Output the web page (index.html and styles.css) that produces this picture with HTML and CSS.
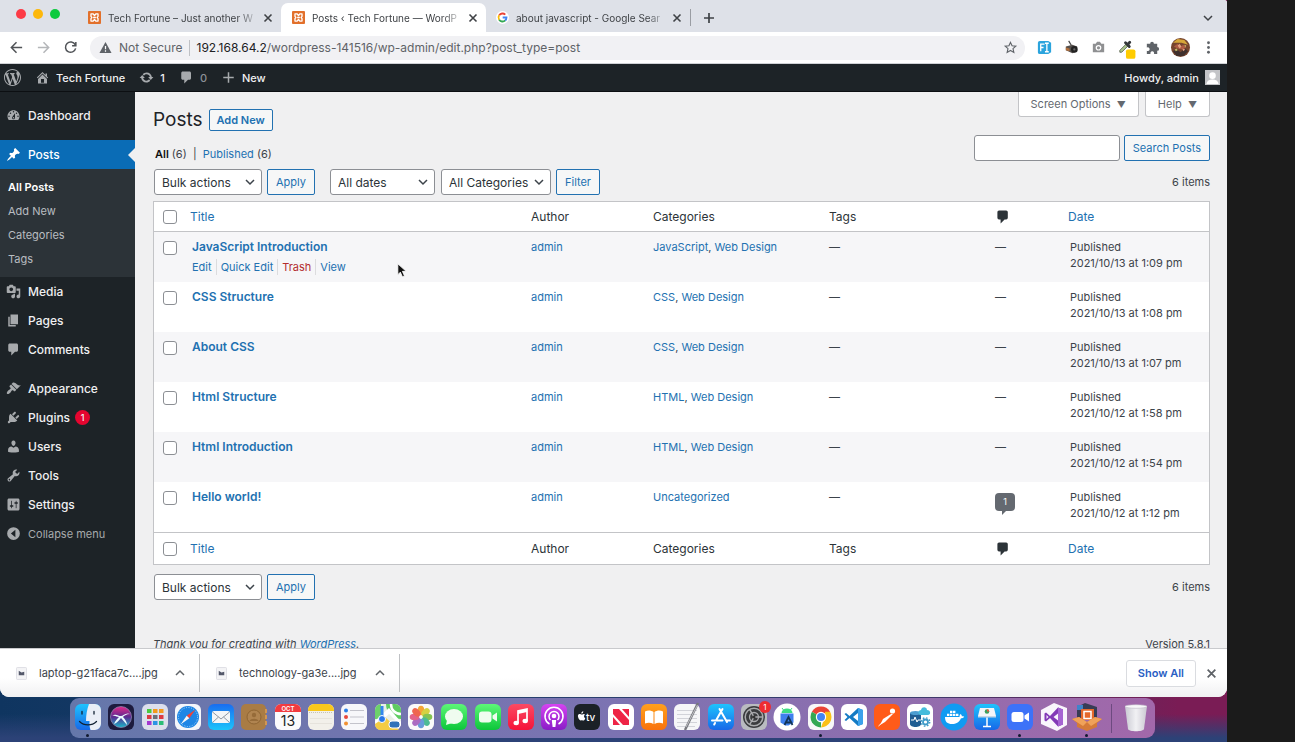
FILE: index.html
```html
<!DOCTYPE html>
<html lang="en">
<head>
<meta charset="utf-8">
<title>Posts ‹ Tech Fortune — WordPress</title>
<link rel="stylesheet" href="styles.css">
</head>
<body>
<svg class="defs" width="0" height="0" aria-hidden="true">
  <defs>
    <symbol id="xampp" viewBox="0 0 14 14"><rect width="14" height="14" rx="1" fill="#e2702b"/><path d="M3.200 3.200h2.400L7 4.800l1.400-1.600h2.400v2.600L9.800 7l1 1.200v2.600H8.400L7 9.200l-1.400 1.600H3.200V8.200l1-1.200-1-1.200zM5.500 7h3" fill="none" stroke="#fff" stroke-width="1.400" stroke-linejoin="round"/></symbol>
    <symbol id="chev" viewBox="0 0 10 10"><path d="M1 3l4 4 4-4" fill="none" stroke="currentColor" stroke-width="1.500"/></symbol>
    <symbol id="close" viewBox="0 0 10 10"><path d="M1.500 1.500l7 7m0-7l-7 7" fill="none" stroke="currentColor" stroke-width="1.600"/></symbol>
    <symbol id="comment" viewBox="0 0 20 20"><path d="M5 2h9c1.100 0 2 .9 2 2v7c0 1.100-.9 2-2 2h-2l-5 5v-5H5c-1.100 0-2-.9-2-2V4c0-1.100.9-2 2-2z"/></symbol>
    <symbol id="picture" viewBox="0 0 12 14"><rect x=".5" y=".5" width="11" height="13" rx="1" fill="#f4f4f6" stroke="#dcdce2"/><path d="M3 4l3 2 3-1v4H3z" fill="#55596b"/></symbol>
    <linearGradient id="gBlue" x2="0" y2="1"><stop stop-color="#1fc3fd"/><stop offset="1" stop-color="#1768e8"/></linearGradient>
    <linearGradient id="gMail" x2="0" y2="1"><stop stop-color="#1a6df0"/><stop offset="1" stop-color="#1cc4fb"/></linearGradient>
    <linearGradient id="gGreen" x2="0" y2="1"><stop stop-color="#5df777"/><stop offset="1" stop-color="#0cc63a"/></linearGradient>
    <linearGradient id="gRed" x2="0" y2="1"><stop stop-color="#fb4a63"/><stop offset="1" stop-color="#f5133a"/></linearGradient>
    <linearGradient id="gPurple" x2="0" y2="1"><stop stop-color="#d543f1"/><stop offset="1" stop-color="#8a1cc7"/></linearGradient>
    <linearGradient id="gOrange" x2="0" y2="1"><stop stop-color="#ffa01c"/><stop offset="1" stop-color="#f9720d"/></linearGradient>
    <linearGradient id="gTrash" x2="1" y2="0"><stop stop-color="#c9c9d2"/><stop offset=".5" stop-color="#f1f1f4"/><stop offset="1" stop-color="#cbc8d2"/></linearGradient>
    <linearGradient id="gSiri" x2="0" y2="1"><stop stop-color="#e42a8a"/><stop offset=".5" stop-color="#5a2a91"/><stop offset="1" stop-color="#18b9c9"/></linearGradient>
  </defs>
</svg>

<div class="desktop">
  <div class="browser">
    <div class="tabstrip">
      <div class="lights"><i class="red"></i><i class="amber"></i><i class="green"></i></div>
      <div class="tab">
        <svg class="fav"><use href="#xampp"/></svg><span class="tab-title">Tech Fortune – Just another W</span>
        <button class="tab-close" aria-label="Close tab"><svg><use href="#close"/></svg></button>
      </div>
      <div class="tab active">
        <svg class="fav"><use href="#xampp"/></svg><span class="tab-title">Posts ‹ Tech Fortune — WordP</span>
        <button class="tab-close" aria-label="Close tab"><svg><use href="#close"/></svg></button>
      </div>
      <div class="tab last">
        <svg class="fav" viewBox="0 0 14 14"><circle cx="7" cy="7" r="7" fill="#fff"/><g fill="none" stroke-width="2"><path d="M3.400 4.600A4.300 4.300 0 0 1 10 3.900" stroke="#ea4335"/><path d="M3.400 9.400a4.300 4.300 0 0 1 0-4.800" stroke="#fbbc05"/><path d="M10 10.100a4.300 4.300 0 0 1-6.600-.7" stroke="#34a853"/><path d="M7.200 7h4.100a4.300 4.300 0 0 1-1.400 3.200" stroke="#4285f4"/></g></svg><span class="tab-title">about javascript - Google Sear</span>
        <button class="tab-close" aria-label="Close tab"><svg><use href="#close"/></svg></button>
      </div>
      <button class="new-tab" aria-label="New tab"><svg viewBox="0 0 12 12"><path d="M6 1v10M1 6h10" stroke="currentColor" stroke-width="1.700"/></svg></button>
      <button class="tab-search" aria-label="Search tabs"><svg><use href="#chev"/></svg></button>
    </div>

    <div class="toolbar">
      <button aria-label="Back"><svg viewBox="0 0 16 16"><path d="M14 8H3m5-5.500L2.500 8 8 13.500"/></svg></button>
      <button aria-label="Forward" class="dim"><svg viewBox="0 0 16 16"><path d="M2 8h11M8 2.500L13.500 8 8 13.500"/></svg></button>
      <button aria-label="Reload"><svg viewBox="0 0 16 16"><path d="M13 5A5.500 5.500 0 1 0 13.500 9M13.700 2v4h-4"/></svg></button>
      <div class="address">
        <svg class="warn" viewBox="0 0 14 14"><path d="M7 1l6.500 12H.5z" fill="#5f6368"/><path d="M7 5.500v3.500M7 10v1.500" stroke="#fff" stroke-width="1.300"/></svg>
        <span class="secure">Not Secure</span>
        <span class="url"><b>192.168.64.2</b>/wordpress-141516/wp-admin/edit.php?post_type=post</span>
        <svg class="star" viewBox="0 0 14 14"><path d="M7 1.500l1.700 3.700 4 .4-3 2.700.9 4L7 10.200l-3.600 2.100.9-4-3-2.700 4-.4z" fill="none" stroke="#5f6368" stroke-width="1.200"/></svg>
      </div>
      <div class="extensions">
        <svg viewBox="0 0 18 18"><path d="M4 2h9l3 2v10l-3 2H4a2 2 0 0 1-2-2V4a2 2 0 0 1 2-2z" fill="#2ba4dd"/><path d="M5 13V5.500h4M5 9h3M9.500 4.500h4M9.500 13.500h4M11.500 4.500v9" stroke="#fff" stroke-width="1.400" fill="none"/></svg>
        <svg viewBox="0 0 18 18"><path d="M6 2l3 5" stroke="#444" stroke-width="1.200"/><path d="M3 8l7-2 5 2v5l-5 2-7-3z" fill="#55504d"/><path d="M3 9l4 1v3l-4-1z" fill="#b06f3c"/><circle cx="12" cy="11" r="3.500" fill="#222"/><circle cx="12" cy="11" r="1.200" fill="#666"/></svg>
        <svg viewBox="0 0 18 18"><path d="M3 5h3l1.500-2h3L12 5h3v9H3z" fill="#8f9092"/><circle cx="9" cy="9.300" r="3" fill="#fff"/><circle cx="9" cy="9.300" r="1.700" fill="#8f9092"/></svg>
        <svg viewBox="0 0 18 18"><path d="M3 12l7-7 2 2-7 7H3z" fill="#a9c48c" stroke="#66705c"/><path d="M9 4l4 4M11 6l2.500-2.500" stroke="#35383b" stroke-width="3" stroke-linecap="round"/><rect x="9.500" y="11" width="10" height="10" rx="2" fill="#fc0"/></svg>
        <svg viewBox="0 0 18 18"><path d="M3 5h3.500a2 2 0 1 1 4 0H14v3.500a2 2 0 1 1 0 4V16h-3.500a2 2 0 1 0-3.500 0H3v-3.500a2 2 0 1 0 0-3.500z" fill="#5f6368"/></svg>
        <svg class="profile" viewBox="0 0 20 20"><circle cx="10" cy="10" r="10" fill="#77452e"/><path d="M2 5l5-4 7 1 4 5-7-2z" fill="#d6a739"/><path d="M3 9l4-3 2 4 4-3 3 3-4 2-5-1z" fill="#ae5b42"/><path d="M2 14l4-2 4 3 5-4 3 3-5 5H6z" fill="#3f302d"/><path d="M7 8l2-2 2 3-2 2zM12 11l3 1-2 2z" fill="#e4a080"/><path d="M4 12l2-1 1 2-2 1zM14 7l2 1-1 2z" fill="#c9c06a"/></svg>
        <svg viewBox="0 0 18 18"><g fill="#5f6368"><circle cx="9" cy="4" r="1.500"/><circle cx="9" cy="9" r="1.500"/><circle cx="9" cy="14" r="1.500"/></g></svg>
      </div>
    </div>

    <header class="adminbar">
      <a href="#" aria-label="About WordPress"><svg class="wp" viewBox="0 0 20 20"><path d="M20 10c0-5.510-4.490-10-10-10C4.480 0 0 4.490 0 10c0 5.520 4.480 10 10 10 5.510 0 10-4.480 10-10zM7.780 15.370L4.370 6.220c.55-.02 1.170-.08 1.170-.08.5-.06.44-1.130-.06-1.110 0 0-1.450.11-2.370.11-.18 0-.37 0-.58-.01C4.120 2.690 6.870 1.110 10 1.110c2.330 0 4.450.87 6.050 2.340-.68-.11-1.650.39-1.650 1.580 0 .74.45 1.360.9 2.100.35.61.55 1.360.55 2.460 0 1.490-1.400 5-1.400 5l-3.030-8.370c.54-.02.82-.17.82-.17.5-.05.44-1.250-.06-1.220 0 0-1.440.12-2.380.12-.87 0-2.330-.12-2.330-.12-.5-.03-.56 1.200-.06 1.220l.92.08 1.260 3.410zM17.410 10c.24-.64.74-1.870.43-4.250.7 1.290 1.050 2.710 1.050 4.250 0 3.290-1.730 6.240-4.400 7.780.97-2.590 1.940-5.200 2.920-7.780zM6.100 18.090C3.120 16.650 1.110 13.530 1.110 10c0-1.300.23-2.480.72-3.590C3.250 10.300 4.670 14.200 6.100 18.090zm4.030-6.630l2.580 6.980c-.86.29-1.760.45-2.710.45-.79 0-1.570-.11-2.290-.33.81-2.380 1.620-4.740 2.420-7.100z"/></svg></a>
      <a href="#"><svg viewBox="0 0 20 20"><path d="M16 8.500l1.530 1.530-1.060 1.060L10 4.600l-6.470 6.490-1.060-1.060L10 2.500l4 4v-2h2v4zm-6-2.460l6 5.990V18H4v-5.970zM12 17v-5H8v5h4z"/></svg>Tech Fortune</a>
      <a href="#"><svg viewBox="0 0 20 20"><path d="M10.200 3.280c3.530 0 6.430 2.610 6.920 6h2.080l-3.500 4-3.500-4h2.320c-.45-1.970-2.210-3.450-4.320-3.450-1.450 0-2.730.71-3.540 1.780L4.950 5.660C6.230 4.200 8.110 3.280 10.200 3.280zm-.4 13.440c-3.520 0-6.430-2.610-6.920-6H.8l3.500-4c1.170 1.330 2.330 2.670 3.500 4H5.480c.45 1.970 2.210 3.450 4.320 3.450 1.450 0 2.730-.71 3.540-1.780l1.710 1.950c-1.280 1.460-3.150 2.380-5.250 2.380z"/></svg>1</a>
      <a href="#" class="muted"><svg><use href="#comment"/></svg>0</a>
      <a href="#"><svg viewBox="0 0 20 20"><path d="M9 3h2v6h6v2h-6v6H9v-6H3V9h6z"/></svg>New</a>
      <a href="#" class="howdy">Howdy, admin<svg class="avatar" viewBox="0 0 16 16"><path d="M0 0h16v16H0z" fill="#c3c4c7"/><circle cx="8" cy="6" r="3.500" fill="#fff"/><path d="M1.500 15c.5-3.500 3-5 6.500-5s6 1.500 6.500 5z" fill="#fff"/></svg></a>
    </header>

    <div class="page">
      <nav class="sidebar">
        <a href="#"><svg viewBox="0 0 20 20"><path d="M3.760 16h12.480c1.100-1.370 1.760-3.110 1.760-5 0-4.420-3.580-8-8-8s-8 3.580-8 8c0 1.890.66 3.630 1.760 5zM10 4c.55 0 1 .45 1 1s-.45 1-1 1-1-.45-1-1 .45-1 1-1zM6 6c.55 0 1 .45 1 1s-.45 1-1 1-1-.45-1-1 .45-1 1-1zm8 0c.55 0 1 .45 1 1s-.45 1-1 1-1-.45-1-1 .45-1 1-1zm-5.370 5.550L12 7v6c0 1.100-.9 2-2 2s-2-.9-2-2c0-.57.24-1.080.63-1.450zM4 10c.55 0 1 .45 1 1s-.45 1-1 1-1-.45-1-1 .45-1 1-1zm12 0c.55 0 1 .45 1 1s-.45 1-1 1-1-.45-1-1 .45-1 1-1zm-5 3c0-.55-.45-1-1-1s-1 .45-1 1 .45 1 1 1 1-.45 1-1z"/></svg>Dashboard</a>
        <a href="#" class="group current"><svg viewBox="0 0 20 20"><path d="M10.440 3.020l1.820-1.820 6.360 6.350-1.830 1.820c-1.050-.68-2.480-.57-3.410.36l-.75.75c-.92.93-1.040 2.350-.35 3.410l-1.830 1.820-2.410-2.410-2.800 2.790c-.42.42-3.380 2.710-3.800 2.290s1.860-3.390 2.280-3.810l2.790-2.790L4.100 9.360l1.830-1.820c1.050.69 2.480.57 3.400-.36l.75-.75c.93-.92 1.050-2.350.36-3.410z"/></svg>Posts</a>
        <div class="submenu">
          <a href="#" class="on">All Posts</a><a href="#">Add New</a><a href="#">Categories</a><a href="#">Tags</a>
        </div>
        <a href="#"><svg viewBox="0 0 20 20"><path d="M13 11V4c0-.55-.45-1-1-1h-1.670L9 1H5L3.670 3H2c-.55 0-1 .45-1 1v7c0 .55.45 1 1 1h10c.55 0 1-.45 1-1zM7 4.500c1.380 0 2.500 1.120 2.500 2.500S8.380 9.500 7 9.500 4.500 8.380 4.500 7 5.620 4.500 7 4.500zM14 6h5v10.500c0 1.380-1.120 2.500-2.500 2.500S14 17.880 14 16.500s1.120-2.500 2.500-2.500c.17 0 .34.02.5.05V9h-3V6zm-4 8.050V13h2v3.500c0 1.380-1.120 2.500-2.500 2.500S7 17.880 7 16.500 8.120 14 9.500 14c.17 0 .34.02.5.05z"/></svg>Media</a>
        <a href="#"><svg viewBox="0 0 20 20"><path d="M6 15V2h10v13H6zm-1 1h8v2H3V5h2v11z"/></svg>Pages</a>
        <a href="#"><svg><use href="#comment"/></svg>Comments</a>
        <a href="#" class="group"><svg viewBox="0 0 20 20"><path d="M14.480 11.060L7.410 3.990l1.500-1.500c.5-.56 2.300-.47 3.510.32 1.210.8 1.430 1.280 2.910 2.100 1.180.64 2.450 1.260 4.450.85zm-.71.71L6.700 4.700 4.930 6.470c-.39.39-.39 1.020 0 1.410l1.060 1.060c.39.39.39 1.030 0 1.420-.6.6-1.430 1.110-2.210 1.690-.35.26-.7.53-1.010.84C1.430 14.230.4 16.080 1.400 17.070c.99 1 2.840-.03 4.180-1.360.31-.31.58-.66.85-1.020.57-.78 1.080-1.610 1.690-2.210.39-.39 1.020-.39 1.410 0l1.060 1.060c.39.39 1.020.39 1.410 0z"/></svg>Appearance</a>
        <a href="#"><svg viewBox="0 0 20 20"><path d="M13.110 4.360L9.870 7.600 8 5.730l3.240-3.240c.35-.34 1.050-.2 1.560.32.52.51.66 1.210.31 1.550zm-8 1.770l.91-1.120 9.010 9.010-1.190.84c-.71.71-2.630 1.160-3.820 1.160H6.140L4.900 17.260c-.59.59-1.540.59-2.120 0-.59-.58-.59-1.530 0-2.120l1.240-1.240v-3.880c0-1.130.4-3.190 1.090-3.890zm7.260 3.970l3.240-3.240c.34-.35 1.040-.21 1.550.31.52.51.66 1.210.31 1.550l-3.240 3.250z"/></svg>Plugins<span class="count">1</span></a>
        <a href="#"><svg viewBox="0 0 20 20"><path d="M10 9.250c-2.270 0-2.730-3.440-2.730-3.440C7 4.020 7.820 2 9.970 2c2.160 0 2.980 2.020 2.710 3.810 0 0-.41 3.440-2.680 3.440zm0 2.570L12.720 10c2.390 0 4.520 2.330 4.520 4.530v2.490s-3.650 1.130-7.240 1.130c-3.650 0-7.240-1.130-7.240-1.130v-2.490c0-2.250 1.940-4.480 4.470-4.480z"/></svg>Users</a>
        <a href="#"><svg viewBox="0 0 20 20"><path d="M16.680 9.770c-1.340 1.340-3.300 1.670-4.950.99l-5.410 6.520c-.99.99-2.590.99-3.580 0s-.99-2.590 0-3.570l6.520-5.420c-.68-1.650-.35-3.610.99-4.950 1.280-1.280 3.120-1.620 4.720-1.060l-2.890 2.890 2.820 2.820 2.860-2.870c.53 1.580.18 3.390-1.080 4.650zM3.810 16.210c.4.39 1.040.39 1.430 0 .4-.4.4-1.040 0-1.430-.39-.4-1.030-.4-1.430 0-.39.39-.39 1.030 0 1.430z"/></svg>Tools</a>
        <a href="#"><svg viewBox="0 0 20 20"><path d="M18 16V4c0-1.100-.9-2-2-2H4c-1.100 0-2 .9-2 2v12c0 1.100.9 2 2 2h12c1.100 0 2-.9 2-2zM8 11h1c.55 0 1 .45 1 1s-.45 1-1 1H8v1.500c0 .28-.22.5-.5.5s-.5-.22-.5-.5V13H6c-.55 0-1-.45-1-1s.45-1 1-1h1V5.500c0-.28.22-.5.5-.5s.5.22.5.5V11zm5-2h-1c-.55 0-1-.45-1-1s.45-1 1-1h1V5.500c0-.28.22-.5.5-.5s.5.22.5.5V7h1c.55 0 1 .45 1 1s-.45 1-1 1h-1v5.500c0 .28-.22.5-.5.5s-.5-.22-.5-.5V9z"/></svg>Settings</a>
        <button class="collapse"><svg viewBox="0 0 20 20"><path fill-rule="evenodd" d="M10 1.500a8.500 8.500 0 1 0 0 17 8.500 8.500 0 0 0 0-17zM12.500 5v10L6.500 10z"/></svg>Collapse menu</button>
      </nav>

      <main class="content">
        <div class="head">
          <div>
            <div class="title-row"><h1>Posts</h1><a href="#" class="btn small">Add New</a></div>
            <p class="views"><a href="#" class="all">All</a> (6) &nbsp;<span>|</span>&nbsp; <a href="#">Published</a> (6)</p>
          </div>
          <div class="head-right">
            <div class="screen-meta"><button>Screen Options <span>▼</span></button><button>Help <span>▼</span></button></div>
            <form class="search"><input type="text" aria-label="Search Posts"><button type="button" class="btn">Search Posts</button></form>
          </div>
        </div>

        <div class="tablenav top">
          <label class="select w108"><select aria-label="Bulk actions"><option>Bulk actions</option></select><svg><use href="#chev"/></svg></label>
          <button class="btn">Apply</button>
          <label class="select dates"><select aria-label="Filter by date"><option>All dates</option></select><svg><use href="#chev"/></svg></label>
          <label class="select w110"><select aria-label="Filter by category"><option>All Categories</option></select><svg><use href="#chev"/></svg></label>
          <button class="btn">Filter</button>
          <span class="items">6 items</span>
        </div>

        <table>
          <colgroup><col class="c-check"><col><col class="c-author"><col class="c-cats"><col class="c-tags"><col class="c-comm"><col class="c-date"></colgroup>
          <thead><tr><th><input type="checkbox" aria-label="Select all"></th><th><a href="#">Title</a></th><th>Author</th><th>Categories</th><th>Tags</th><th><svg class="ci" role="img" aria-label="Comments"><use href="#comment"/></svg></th><th><a href="#">Date</a></th></tr></thead>
          <tbody>
            <tr><td><input type="checkbox" aria-label="Select JavaScript Introduction"></td><td><a href="#" class="row-title">JavaScript Introduction</a><div class="actions"><a href="#">Edit</a><a href="#">Quick Edit</a><a href="#" class="trash">Trash</a><a href="#">View</a></div></td><td><a href="#">admin</a></td><td><a href="#">JavaScript</a>, <a href="#">Web Design</a></td><td>—</td><td>—</td><td>Published<br>2021/10/13 at 1:09 pm</td></tr>
            <tr><td><input type="checkbox" aria-label="Select CSS Structure"></td><td><a href="#" class="row-title">CSS Structure</a></td><td><a href="#">admin</a></td><td><a href="#">CSS</a>, <a href="#">Web Design</a></td><td>—</td><td>—</td><td>Published<br>2021/10/13 at 1:08 pm</td></tr>
            <tr><td><input type="checkbox" aria-label="Select About CSS"></td><td><a href="#" class="row-title">About CSS</a></td><td><a href="#">admin</a></td><td><a href="#">CSS</a>, <a href="#">Web Design</a></td><td>—</td><td>—</td><td>Published<br>2021/10/13 at 1:07 pm</td></tr>
            <tr><td><input type="checkbox" aria-label="Select Html Structure"></td><td><a href="#" class="row-title">Html Structure</a></td><td><a href="#">admin</a></td><td><a href="#">HTML</a>, <a href="#">Web Design</a></td><td>—</td><td>—</td><td>Published<br>2021/10/12 at 1:58 pm</td></tr>
            <tr><td><input type="checkbox" aria-label="Select Html Introduction"></td><td><a href="#" class="row-title">Html Introduction</a></td><td><a href="#">admin</a></td><td><a href="#">HTML</a>, <a href="#">Web Design</a></td><td>—</td><td>—</td><td>Published<br>2021/10/12 at 1:54 pm</td></tr>
            <tr><td><input type="checkbox" aria-label="Select Hello world!"></td><td><a href="#" class="row-title">Hello world!</a></td><td><a href="#">admin</a></td><td><a href="#">Uncategorized</a></td><td>—</td><td><a href="#" class="bubble">1</a></td><td>Published<br>2021/10/12 at 1:12 pm</td></tr>
          </tbody>
          <tfoot><tr><th><input type="checkbox" aria-label="Select all"></th><th><a href="#">Title</a></th><th>Author</th><th>Categories</th><th>Tags</th><th><svg class="ci" role="img" aria-label="Comments"><use href="#comment"/></svg></th><th><a href="#">Date</a></th></tr></tfoot>
        </table>

        <div class="tablenav bottom">
          <label class="select w108"><select aria-label="Bulk actions"><option>Bulk actions</option></select><svg><use href="#chev"/></svg></label>
          <button class="btn">Apply</button>
          <span class="items">6 items</span>
        </div>
        <footer><em>Thank you for creating with <a href="#">WordPress</a>.</em><span>Version 5.8.1</span></footer>
        <svg class="pointer" viewBox="0 0 12 18"><path d="M1 1v13l3-3 2.500 5.500 2.500-1L6.500 10H11z" fill="#111" stroke="#fff"/></svg>
      </main>
    </div>

    <div class="downloads">
      <div class="file"><svg class="thumb"><use href="#picture"/></svg><span>laptop-g21faca7c....jpg</span><button aria-label="File options"><svg class="up"><use href="#chev"/></svg></button></div>
      <div class="file"><svg class="thumb"><use href="#picture"/></svg><span>technology-ga3e....jpg</span><button aria-label="File options"><svg class="up"><use href="#chev"/></svg></button></div>
      <button class="show-all">Show All</button>
      <button class="dismiss" aria-label="Close downloads"><svg><use href="#close"/></svg></button>
    </div>
  </div>

  <div class="dock-area">
    <div class="dock">
      <ul>
        <li class="running"><svg viewBox="0 0 26 26"><rect width="26" height="26" rx="6" fill="url(#gBlue)"/><path d="M14 0h6a6 6 0 0 1 6 6v14a6 6 0 0 1-6 6h-4.500c-1-3-1.200-6-1-9H11c0-6 1-12 3-17z" fill="#e9eef6"/><path d="M7 7.500v2.500M19 7.500v2.500M4.500 17.500c4.500 4.500 12.500 4.500 17 0" stroke="#123" stroke-width="1.300" fill="none" stroke-linecap="round"/></svg></li>
        <li><svg viewBox="0 0 26 26"><rect width="26" height="26" rx="6" fill="#1d1b3e"/><circle cx="13" cy="13" r="10.500" fill="url(#gSiri)" stroke="#8c7fae" stroke-width=".8"/><path d="M4 12c4-3 6 0 9 0 2 0 5-4 9-2-4 0-6 2-7 3 2 2 4 5 4 8-2-2-4-5-6-7-2 2-4 5-7 6 1-3 3-5 5-7-2 0-4-2-7-1z" fill="#e9fbff"/></svg></li>
        <li><svg viewBox="0 0 26 26"><rect width="26" height="26" rx="6" fill="#dcdfec"/><g><path d="M5 5h4.500v4H5z" fill="#4bc940"/><path d="M11 5h4.500v4H11zM17 5h4.500v4H17z" fill="#f39a1e"/><path d="M5 11h4.500v4H5zM17 11h4.500v4H17z" fill="#dd3a43"/><path d="M11 11h4.500v4H11z" fill="#6a717c"/><path d="M5 17h4.500v4H5z" fill="#a438d0"/><path d="M11 17h4.500v4H11z" fill="#2c93e4"/><path d="M17 17h4.500v4H17z" fill="#2bbd76"/></g></svg></li>
        <li><svg viewBox="0 0 26 26"><rect width="26" height="26" rx="6" fill="#f4f6fa"/><circle cx="13" cy="13" r="11" fill="#1e86e5"/><circle cx="13" cy="13" r="9.500" fill="none" stroke="#a8d8fa" stroke-dasharray="1 1.500"/><path d="M20.500 5.500L14.300 14.300 11.700 11.700z" fill="#f24236"/><path d="M5.500 20.500l6.200-8.800 2.600 2.600z" fill="#f7f7f7"/></svg></li>
        <li><svg viewBox="0 0 26 26"><rect width="26" height="26" rx="6" fill="url(#gMail)"/><rect x="4" y="7" width="18" height="12" rx="2" fill="#f4f5f7"/><path d="M4.500 8l8.500 7 8.500-7M4.500 18.500l6-5.500m5 0l6 5.500" stroke="#8f98a4" fill="none"/></svg></li>
        <li><svg viewBox="0 0 26 26"><rect width="25" height="26" rx="5" fill="#a97c45"/><path d="M25 5v4M25 11v4M25 17v4" stroke="#d29652" stroke-width="2"/><circle cx="13" cy="13" r="7" fill="#b08450" stroke="#8f6533"/><circle cx="13" cy="11" r="2.200" fill="#966b39"/><path d="M8.500 17c1-3 8-3 9 0z" fill="#966b39"/></svg></li>
        <li><svg viewBox="0 0 26 26"><rect width="26" height="26" rx="6" fill="#fafafc"/><path d="M0 8V6a6 6 0 0 1 6-6h14a6 6 0 0 1 6 6v2z" fill="#f23b3f"/><text x="13" y="7" font-size="6" font-weight="600" text-anchor="middle" fill="#fff">OCT</text><text x="13" y="22" font-size="14" text-anchor="middle" fill="#222">13</text></svg></li>
        <li><svg viewBox="0 0 26 26"><rect width="26" height="26" rx="6" fill="#f2f0ea"/><path d="M0 7V6a6 6 0 0 1 6-6h14a6 6 0 0 1 6 6v1z" fill="#f9c81c"/><path d="M1 8.500h24" stroke="#c9c4b0" stroke-dasharray="1 1"/><path d="M2 14.500h22M2 19.500h22" stroke="#e6e3dc"/></svg></li>
        <li><svg viewBox="0 0 26 26"><rect width="26" height="26" rx="6" fill="#f7f7fa"/><circle cx="5" cy="6.500" r="2" fill="#2a7fe9"/><circle cx="5" cy="13" r="2" fill="#e8483c"/><circle cx="5" cy="19.500" r="2" fill="#f19133"/><path d="M9 6.500h14M9 13h14M9 19.500h14" stroke="#c3c3cb"/></svg></li>
        <li><svg viewBox="0 0 26 26"><rect width="26" height="26" rx="6" fill="#e9efe6"/><path d="M11 0h9a6 6 0 0 1 6 6v9C18 15 11 9 11 0z" fill="#5fcc61"/><path d="M0 6a6 6 0 0 1 6-6v15H0z" fill="#6cd26a"/><path d="M16 0c0 6 4 10 10 10" stroke="#fff" stroke-width="2.500" fill="none"/><path d="M0 17L14 4l12 14v4L14 10 1 22z" fill="#fff"/><path d="M7 2v24" stroke="#3487ee" stroke-width="3"/><path d="M0 20l10-7 14 13H6c-3 0-6-2-6-6z" fill="#f4cc44"/><circle cx="7" cy="15" r="3.500" fill="#2878e8" stroke="#fff"/><rect x="14" y="17" width="11" height="7" rx="3" fill="#3273b9" stroke="#fff"/></svg></li>
        <li><svg viewBox="0 0 26 26"><rect width="26" height="26" rx="6" fill="#fafafa"/><g opacity=".88"><ellipse cx="13" cy="6.500" rx="3.300" ry="4.800" fill="#f59a1c"/><ellipse cx="13" cy="6.500" rx="3.300" ry="4.800" fill="#d2cc28" transform="rotate(45 13 13)"/><ellipse cx="13" cy="6.500" rx="3.300" ry="4.800" fill="#74bd3b" transform="rotate(90 13 13)"/><ellipse cx="13" cy="6.500" rx="3.300" ry="4.800" fill="#35b387" transform="rotate(135 13 13)"/><ellipse cx="13" cy="6.500" rx="3.300" ry="4.800" fill="#568fd6" transform="rotate(180 13 13)"/><ellipse cx="13" cy="6.500" rx="3.300" ry="4.800" fill="#a15abb" transform="rotate(225 13 13)"/><ellipse cx="13" cy="6.500" rx="3.300" ry="4.800" fill="#e04f7a" transform="rotate(270 13 13)"/><ellipse cx="13" cy="6.500" rx="3.300" ry="4.800" fill="#ee5138" transform="rotate(315 13 13)"/></g></svg></li>
        <li><svg viewBox="0 0 26 26"><rect width="26" height="26" rx="6" fill="url(#gGreen)"/><ellipse cx="13" cy="12.500" rx="9" ry="7.500" fill="#effcef"/><path d="M6 16l-1 5 6-2z" fill="#effcef"/></svg></li>
        <li><svg viewBox="0 0 26 26"><rect width="26" height="26" rx="6" fill="url(#gGreen)"/><rect x="4" y="7.500" width="12.500" height="11" rx="3" fill="#effcef"/><path d="M17.500 11.500l4.500-3v9l-4.500-3z" fill="#effcef"/></svg></li>
        <li><svg viewBox="0 0 26 26"><rect width="26" height="26" rx="6" fill="url(#gRed)"/><path d="M10 19V7l9-2v12" fill="none" stroke="#fff" stroke-width="1.700"/><path d="M10 7l9-2v3l-9 2z" fill="#fff"/><ellipse cx="8.200" cy="19" rx="2.700" ry="2.200" fill="#fff"/><ellipse cx="17.200" cy="17" rx="2.700" ry="2.200" fill="#fff"/></svg></li>
        <li><svg viewBox="0 0 26 26"><rect width="26" height="26" rx="6" fill="url(#gPurple)"/><g fill="none" stroke="#fff" stroke-width="1.500"><path d="M8.500 20A9 9 0 1 1 17.500 20"/><path d="M9.500 16a5 5 0 1 1 7 0"/></g><circle cx="13" cy="12" r="2.300" fill="#fff"/><path d="M10.800 16h4.400l-.8 7h-2.800z" fill="#fff"/></svg></li>
        <li><svg viewBox="0 0 26 26"><rect width="26" height="26" rx="6" fill="#1b2127"/><path d="M8.500 10.500c1-1 2-.5 2.500 0-1.500 1-1.200 3 .3 3.700-.6 1.500-1.500 2.800-2.600 2.200-.7-.3-1-.3-1.700 0C5.500 17 3.500 13 4 11.300c.6-1.700 2-1.500 3-.9.700.3 1 .2 1.500.1zM7.300 9.600c0-1.300.8-2.200 2-2.400 0 1.300-.8 2.300-2 2.400z" fill="#fff"/><text x="12" y="16.500" font-size="10" font-weight="500" fill="#fff">tv</text></svg></li>
        <li><svg viewBox="0 0 26 26"><rect width="26" height="26" rx="6" fill="#fff"/><path d="M5 5h6l10 11v5h-6L5 10z" fill="#ee2446"/><path d="M14 5h7v8zM5 13l7 8H5z" fill="#ee2446"/></svg></li>
        <li><svg viewBox="0 0 26 26"><rect width="26" height="26" rx="6" fill="url(#gOrange)"/><path d="M4 7.500c3-1.500 6-1.200 8.500.5v12c-2.500-1.500-5.500-1.800-8.500-.5zM22 7.500c-3-1.500-6-1.200-8.500.5v12c2.500-1.500 5.500-1.800 8.500-.5z" fill="#fff"/></svg></li>
        <li><svg viewBox="0 0 26 26"><rect width="26" height="26" rx="6" fill="#f6f6f8"/><path d="M3 6.500h20M3 10.500h20M3 14.500h20M3 18.500h20M3 22.500h18" stroke="#d2d3d9"/><path d="M24 -1L11 26" stroke="#77787e" stroke-width="2.400"/><path d="M23.500 1L12 23" stroke="#d3d3d6" stroke-width=".8"/></svg></li>
        <li><svg viewBox="0 0 26 26"><rect width="26" height="26" rx="6" fill="url(#gBlue)"/><g fill="none" stroke="#fff" stroke-width="2" stroke-linecap="round"><path d="M14.500 5L8 16.500M11.500 5l7.500 13M4 16.500h10.500M19 16.500h3M7 19l-.8 1.500"/></g></svg></li>
        <li class="badged"><svg viewBox="0 0 26 26"><rect width="26" height="26" rx="6" fill="#b9bbc0"/><circle cx="13" cy="13" r="11" fill="#3a3b3e"/><circle cx="13" cy="13" r="8.800" fill="none" stroke="#aaabae" stroke-width="1.500"/><circle cx="13" cy="13" r="4.500" fill="none" stroke="#aaabae" stroke-width="1.300"/><path d="M13 13h9M13 13L8.500 5.200M13 13L8.500 20.800" stroke="#aaabae" stroke-width="1.500"/><circle cx="13" cy="13" r="1.500" fill="#333"/></svg><span class="badge">1</span></li>
        <li><svg viewBox="0 0 26 26"><circle cx="13" cy="13" r="13.500" fill="#fff"/><path d="M7.500 9a5.500 4.500 0 0 1 11 0z" fill="#3ddc84"/><path d="M8 4l1.500 2M18 4l-1.500 2" stroke="#3ddc84"/><path d="M6.500 9.500h13v9l-5 3h-3l-5-3z" fill="#3f80ee"/><path d="M10.500 21l4-8 4 8M12.500 18.500h4" fill="none" stroke="#123457" stroke-width="1.800"/></svg></li>
        <li class="running"><svg viewBox="0 0 26 26"><rect width="26" height="26" rx="6" fill="#f8f8f8"/><path d="M13 13L3.900 7.800A10.500 10.500 0 0 1 22.100 7.800z" fill="#ea4335"/><path d="M3.900 7.800L13 13v10.500A10.500 10.500 0 0 1 3.900 7.800z" fill="#34a853"/><path d="M22.100 7.800A10.500 10.500 0 0 1 13 23.500L17 13V7.800z" fill="#fbc116"/><circle cx="13" cy="13" r="5.200" fill="#fff"/><circle cx="13" cy="13" r="4" fill="#4285f4"/></svg></li>
        <li><svg viewBox="0 0 26 26"><rect width="26" height="26" rx="6" fill="#fff"/><path d="M17 4l5 2v14l-5 2L8.500 14 5 17l-1.500-1 3-3-3-3L5 9l3.500 3zM17 9l-5 4 5 4z" fill="#147bc4" fill-rule="evenodd"/><path d="M17 4l5 2v14l-5 2z" fill="#3ba2eb"/></svg></li>
        <li><svg viewBox="0 0 26 26"><rect width="26" height="26" rx="6" fill="#ff5b19"/><path d="M17 10l-8 5-3 6 5-3 8-8z" fill="#fff"/><path d="M4.500 22l11-10" stroke="#fff"/><circle cx="18.500" cy="7" r="2.600" fill="#fff"/></svg></li>
        <li><svg viewBox="0 0 26 26"><rect width="26" height="26" rx="6" fill="#fff"/><path d="M3 9v11c0 4 11 4 11 0V9z" fill="#205e93"/><ellipse cx="8.500" cy="9" rx="5.500" ry="2" fill="#4b9dd1"/><path d="M13 11c-3-2-1-5 1-5 1-4 6-3 6 0 4 0 4 5 1 5z" fill="#45bcdc"/><path d="M4 16h3l1-3 2 5 1-2h3" stroke="#fff" fill="none"/><circle cx="18.500" cy="18" r="2.500" fill="none" stroke="#409bc8" stroke-width="1.800"/><circle cx="18.500" cy="18" r="4.200" fill="none" stroke="#409bc8" stroke-width="1.400" stroke-dasharray="1.600 1.700"/></svg></li>
        <li><svg viewBox="0 0 26 26"><circle cx="13" cy="13" r="13.500" fill="#109bf2"/><path d="M4 13h14.500c0-1.500.2-2 1-3 1 .7 1.300 1.400 1.300 2.200 1 0 1.800 0 2.400.5-.8 1.300-2 1.500-3.200 1.500C18 18.500 15 20 11 20c-4.500 0-7-2-7-7z" fill="#fff"/><path d="M6 9.700h2.400v2.400H6zM9 9.700h2.400v2.400H9zM12 9.700h2.400v2.400H12zM15 9.700h2.400v2.400H15zM9 6.700h2.400v2.400H9zM12 6.700h2.400v2.400H12z" fill="#fff"/></svg></li>
        <li><svg viewBox="0 0 26 26"><rect width="26" height="26" rx="6" fill="url(#gBlue)"/><path d="M6 4h14l2 8H4z" fill="#f3f6f9"/><path d="M4 12h18v1.500H4z" fill="#c5d7e6"/><path d="M13 13.500V22M9 22.500h8" stroke="#fff" stroke-width="1.500"/><circle cx="13" cy="7.500" r="2.300" fill="#3aa05e"/><path d="M13 7.500V5.200a2.300 2.300 0 0 1 2.300 2.300z" fill="#ef5b3e"/></svg></li>
        <li class="running"><svg viewBox="0 0 26 26"><rect width="26" height="26" rx="6" fill="#3d72f8"/><rect x="4.500" y="8" width="12" height="10" rx="2.500" fill="#fff"/><path d="M17.500 11.500l4.500-3v9l-4.500-3z" fill="#fff"/></svg></li>
        <li><svg viewBox="0 0 26 26"><path d="M13 -1l13 5v17l-10 6L0 20V6z" fill="#f9f5fc"/><path d="M17 3.500l5 2v15l-5 2L9 14l-4 3.500-1.500-1v-7L5 8.500 9 12zm0 6L12.500 13l4.500 3.500zM5.500 11v4l2-2z" fill="#8339b7" fill-rule="evenodd"/><path d="M17 3.500l5 2v15l-5 2z" fill="#a664d2"/></svg></li>
        <li class="running"><svg viewBox="0 0 26 26"><path d="M3 3l8-4 12 4v12H3z" fill="#383c55"/><path d="M3 1h6v5H3z" fill="#3f83ca"/><path d="M7 5h13v11H7z" fill="#e5682b"/><path d="M10 7.500h7v7h-7z" fill="none" stroke="#fff" stroke-width="1.500"/><path d="M-2 15l7-2 8 5 8-5 7 2-5 4v4l-10 4-10-4v-4z" fill="#d57a38"/><path d="M5 13l8 5-4 4-11-7zM21 13l-8 5 4 4 11-7z" fill="#f0a25a"/></svg></li>
      </ul>
      <div class="trash-bin"><svg viewBox="0 0 26 28"><path d="M2 2h22l-3 23c-.5 3-15.500 3-16 0z" fill="url(#gTrash)"/><ellipse cx="13" cy="2.500" rx="11" ry="1.800" fill="#f8f8fa" stroke="#bdb9c6" stroke-width=".6"/></svg></div>
    </div>
  </div>
</div>
</body>
</html>
```
FILE: styles.css
```css
* { box-sizing: border-box; }
body {
  margin: 0;
  height: 100vh;
  padding-right: 68px;
  background: #1b1b1b;
  color: #3c434a;
  font: 11px/16px Inter, "Liberation Sans", sans-serif;
  overflow: hidden;
}
.defs { position: absolute; }
a { color: #2271b1; text-decoration: none; }
button { font: inherit; color: inherit; background: none; border: 0; padding: 0; }
svg { flex: none; display: block; fill: currentColor; overflow: visible; }
p, h1, ul { margin: 0; padding: 0; }

.desktop {
  height: 100%;
  display: flex;
  flex-direction: column;
  background: linear-gradient(to top, #2c4277 4px, transparent 28px), linear-gradient(to right, #0f3560, #24406f 40%, #3c3a6c 75%, #7a1c55 96%);
}
.browser {
  flex: 1;
  min-height: 0;
  display: flex;
  flex-direction: column;
  background: #fff;
  border-radius: 0 3px 9px 9px;
  overflow: hidden;
}

/* tab strip */
.tabstrip { display: flex; height: 32px; background: #dee1e8; padding-right: 14px; color: #3f4246; }
.lights { display: flex; gap: 7px; width: 76px; padding: 9px 0 0 16px; }
.lights i { width: 10px; height: 10px; border-radius: 50%; }
.red { background: #fc3b46; }
.amber { background: #fdb80b; }
.green { background: #0cca3e; }
.tab { width: 205px; display: flex; align-items: center; padding: 3px 8px 0 12px; }
.tab.active { background: #fff; margin-top: 3px; padding-top: 0; border-radius: 7px 7px 0 0; padding-left: 11px; }
.tab.last { width: 204px; padding-left: 10px; }
.fav { width: 13px; height: 13px; margin-right: 7px; }
.tab-title { flex: 1; font-size: 10px; white-space: nowrap; mask-image: linear-gradient(to right, #000 88%, #0004 98%); }
.tab-close { margin-left: 7px; }
.tab-close svg { width: 10px; height: 10px; }
.new-tab { border-left: 1px solid #9a9da3; height: 17px; margin-top: 9px; padding-left: 12px; }
.new-tab svg { width: 12px; height: 12px; }
.tab-search { margin-left: auto; padding-top: 3px; }
.tab-search svg { width: 10px; height: 10px; }

/* address row */
.toolbar { display: flex; align-items: center; height: 32px; padding: 0 10px 0 9px; border-bottom: 1px solid #d0d2d6; }
.toolbar > button { width: 16px; margin-right: 11px; color: #505357; }
.toolbar > button svg { width: 15px; height: 15px; fill: none; stroke: currentColor; stroke-width: 1.6; }
.toolbar > .dim { color: #b4b6b9; }
.address { flex: 1; display: flex; align-items: center; height: 24px; border-radius: 12px; background: #f1f1f4; padding: 0 8px 0 9px; font-size: 12px; color: #5f6368; }
.warn { width: 13px; height: 13px; margin-right: 7px; }
.secure { border-right: 1px solid #bfc1c5; padding-right: 6px; margin-right: 7px; }
.url { flex: 1; }
.url b { font-weight: 400; color: #202124; }
.star { width: 13px; height: 13px; }
.extensions { display: flex; align-items: center; gap: 10px; padding-left: 11px; }
.extensions svg { width: 17px; height: 17px; }
.extensions .profile { width: 19px; height: 19px; }

/* WordPress top bar */
.adminbar { display: flex; align-items: center; height: 28px; padding: 0 7px 0 4px; background: #1d2327; border-bottom: 1px solid #0c0f12; }
.adminbar a { display: flex; align-items: center; gap: 6px; margin-right: 14px; color: #f0f0f1; font-weight: 500; }
.adminbar svg { width: 15px; height: 15px; color: #a7aaad; }
.adminbar .wp { width: 17px; height: 17px; }
.adminbar .muted { color: #8c9196; }
.adminbar .howdy { margin: 0 0 0 auto; }

/* sidebar */
.page { flex: 1; min-height: 0; display: flex; overflow: hidden; }
.sidebar { width: 135px; flex: none; background: #1d2327; padding-top: 9px; }
.sidebar > a, .collapse { display: flex; align-items: center; gap: 7px; height: 29px; width: 100%; padding-left: 6px; color: #f0f0f1; font-size: 12px; font-weight: 500; }
.sidebar svg { width: 15px; height: 15px; color: #a7aaad; }
.sidebar > .group { margin-top: 10px; }
.sidebar > .current { position: relative; background: #0a6cb6; color: #fff; }
.sidebar .current svg { color: #fff; }
.current::after { content: ""; position: absolute; right: 0; border: 7px solid transparent; border-right-color: #f0f0f1; border-left: 0; }
.submenu { background: #2c3338; padding: 6px 0; }
.submenu a { display: block; line-height: 24px; padding-left: 8px; color: #b9bdc1; }
.submenu .on { color: #fff; font-weight: 600; }
.count { width: 15px; height: 15px; margin-left: -2px; border-radius: 8px; background: #e5052f; font-size: 9px; line-height: 15px; text-align: center; }
.sidebar .collapse { color: #a7aaad; font-size: 11px; font-weight: 400; }

/* content */
.content { position: relative; flex: 1; min-width: 0; background: #f0f0f1; padding: 0 17px 0 18px; }
.head { display: flex; justify-content: space-between; }
.title-row { display: flex; align-items: center; gap: 6px; margin-top: 17px; }
h1 { font-size: 19px; line-height: 22px; font-weight: 400; color: #1d2327; }
.btn { height: 26px; padding: 0 8px; border: 1px solid #2271b1; border-radius: 2px; background: #f6f7f7; color: #2271b1; white-space: nowrap; }
.btn.small { height: 22px; line-height: 20px; padding: 0 7px; font-weight: 600; }
.views { margin: 15px 0 0 2px; }
.views .all { color: #111; font-weight: 600; }
.screen-meta { display: flex; justify-content: flex-end; gap: 6px; }
.screen-meta button { height: 25px; padding: 0 12px; border: 1px solid #c3c4c7; border-top: 0; border-radius: 0 0 3px 3px; background: #fff; color: #646970; }
.screen-meta span { font-size: 9px; margin-left: 3px; }
.search { display: flex; justify-content: flex-end; gap: 4px; margin-top: 18px; }
.search input { width: 146px; height: 26px; border: 1px solid #8c8f94; border-radius: 3px; background: #fff; }
.tablenav { display: flex; align-items: center; gap: 5px; padding-left: 1px; }
.tablenav.top { margin: 7px 0 6px; }
.tablenav.bottom { margin-top: 9px; }
.items { margin-left: auto; }
.select { position: relative; display: flex; }
.select select { appearance: none; width: 100%; height: 26px; padding: 0 7px; border: 1px solid #8c8f94; border-radius: 3px; background: #fff; color: #2c3338; font: 12px Inter, sans-serif; }
.select svg { position: absolute; right: 7px; top: 8px; width: 10px; height: 10px; pointer-events: none; }
.w108 { width: 108px; }
.w110 { width: 110px; }
.dates { width: 105px; margin-left: 10px; }
.dates + .select { margin-left: 1px; }

table { width: 100%; table-layout: fixed; border-collapse: separate; border-spacing: 0; background: #fff; border: 1px solid #c3c4c7; }
.c-check { width: 28px; }
.c-author { width: 122px; }
.c-cats { width: 176px; }
.c-tags { width: 166px; }
.c-comm { width: 73px; }
.c-date { width: 149px; }
th { height: 31px; padding: 0 8px; text-align: left; font-size: 12px; font-weight: 400; color: #2c3338; }
thead th { height: 30px; border-bottom: 1px solid #c3c4c7; }
tfoot th { height: 32px; border-top: 1px solid #c3c4c7; }
td { height: 50px; padding: 7px 0 0 8px; vertical-align: top; }
td:nth-child(2), td:last-child { padding-left: 10px; }
tbody tr:nth-child(odd) { background: #f6f6f8; }
.row-title { font-size: 12px; font-weight: 600; }
input[type="checkbox"] { appearance: none; display: block; width: 14px; height: 14px; margin: 0; border: 1px solid #8c8f94; border-radius: 3px; background: #fff; }
td input[type="checkbox"] { margin-top: 2px; }
th:first-child, td:first-child { padding-left: 9px; padding-right: 0; }
.actions { display: flex; margin-top: 4px; }
.actions a + a { border-left: 1px solid #dcdcde; margin-left: 4px; padding-left: 4px; }
.actions .trash { color: #b32d2e; }
.ci { width: 16px; height: 16px; }
.bubble { position: relative; display: block; width: 20px; height: 18px; margin-top: 4px; border-radius: 4px; background: #646970; color: #fff; font-size: 9px; line-height: 18px; text-align: center; }
.bubble::after { content: ""; position: absolute; left: 7px; top: 18px; border-top: 4px solid #646970; border-right: 4px solid transparent; }
footer { display: flex; justify-content: space-between; margin-top: 36px; }
footer a { text-decoration: underline; }
.pointer { position: absolute; left: 262px; top: 171px; width: 10px; height: 15px; }

/* downloads */
.downloads { display: flex; align-items: center; height: 49px; padding-right: 10px; border-top: 1px solid #c9cacd; background: linear-gradient(#fff 60%, #f0f0f2); }
.file { display: flex; align-items: center; width: 200px; height: 38px; padding: 0 14px 0 16px; border-right: 1px solid #bfc1c4; }
.thumb { width: 11px; height: 13px; margin-right: 12px; }
.file button { margin-left: auto; color: #5f6368; }
.file .up { width: 10px; height: 10px; rotate: 180deg; }
.show-all { margin-left: auto; height: 27px; padding: 0 11px; border: 1px solid #dadce0; border-radius: 3px; background: #fff; color: #2a5fc4; font-weight: 600; }
.dismiss { margin-left: 10px; color: #5f6368; }
.dismiss svg { width: 11px; height: 11px; }

/* dock */
.dock-area { height: 45px; padding: 1px 72px 4px 70px; }
.dock { display: flex; height: 40px; padding: 6px 6px 0 5px; border-radius: 9px; background: linear-gradient(to right, #6577aa, #7c73b2 50%, #a268aa); }
.dock ul { flex: 1; display: flex; justify-content: space-between; list-style: none; }
.dock li { position: relative; width: 26px; height: 26px; }
.dock svg { width: 26px; height: 26px; }
.running::after { content: ""; position: absolute; left: 11px; top: 30px; width: 3px; height: 3px; border-radius: 50%; background: #111a30; }
.badge { position: absolute; right: -4px; top: -3px; width: 12px; height: 12px; border-radius: 50%; background: #ef2c31; color: #fff; font-size: 8px; line-height: 12px; text-align: center; }
.trash-bin { height: 29px; margin-left: 11px; padding-left: 11px; border-left: 1px solid #6d4a80; }
.dock .trash-bin svg { height: 28px; }
```
